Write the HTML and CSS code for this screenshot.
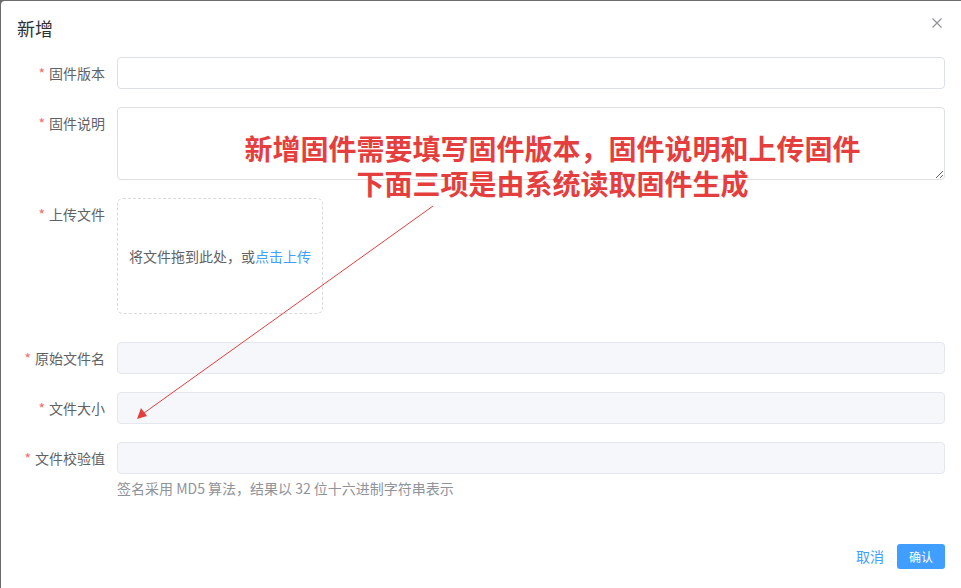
FILE: index.html
```html
<!DOCTYPE html>
<html lang="zh-CN">
<head>
<meta charset="utf-8">
<title>新增</title>
<link rel="stylesheet" href="styles.css">
</head>
<body>
<div class="dialog">
  <div class="header">
    <span class="title">新增</span>
    <svg class="close" width="10" height="10" viewBox="0 0 10 10"><path d="M0.5 0.5L9.5 9.5M9.5 0.5L0.5 9.5" stroke="#909399" stroke-width="1.2" fill="none"/></svg>
  </div>
  <div class="body">
    <div class="form-item">
      <label class="label"><span class="req">*</span>固件版本</label>
      <div class="control"><input class="input" type="text"></div>
    </div>
    <div class="form-item">
      <label class="label"><span class="req">*</span>固件说明</label>
      <div class="control"><textarea class="textarea"></textarea></div>
    </div>
    <div class="form-item upload-item">
      <label class="label"><span class="req">*</span>上传文件</label>
      <div class="control">
        <div class="dragger">将文件拖到此处，或<em class="link">点击上传</em></div>
      </div>
    </div>
    <div class="form-item">
      <label class="label"><span class="req">*</span>原始文件名</label>
      <div class="control"><input class="input disabled" type="text" disabled></div>
    </div>
    <div class="form-item">
      <label class="label"><span class="req">*</span>文件大小</label>
      <div class="control"><input class="input disabled" type="text" disabled></div>
    </div>
    <div class="form-item last">
      <label class="label"><span class="req">*</span>文件校验值</label>
      <div class="control">
        <input class="input disabled" type="text" disabled>
        <div class="hint">签名采用 MD5 算法，结果以 32 位十六进制字符串表示</div>
      </div>
    </div>
  </div>
  <div class="footer">
    <span class="btn-text">取消</span>
    <span class="btn-primary">确认</span>
  </div>
  <div class="note">新增固件需要填写固件版本，固件说明和上传固件<br>下面三项是由系统读取固件生成</div>
  <svg class="arrow" width="961" height="588" viewBox="0 0 961 588">
    <line x1="433" y1="206" x2="144" y2="413" stroke="#e53e3e" stroke-width="1"/>
    <path d="M137 419 L141 408 L147 416 Z" fill="#e53e3e"/>
  </svg>
</div>
</body>
</html>
```

FILE: styles.css
```css
html, body {
  margin: 0;
  padding: 0;
}
body {
  background: #6b6b6b;
  font-family: "Noto Sans CJK SC", "Noto Sans", "Liberation Sans", sans-serif;
  overflow: hidden;
}
.dialog {
  position: relative;
  margin: 1px 0 0 1px;
  width: 960px;
  height: 587px;
  background: #fff;
  border-radius: 4px 0 0 0;
  display: flex;
  flex-direction: column;
  box-sizing: border-box;
}
.header {
  display: flex;
  justify-content: space-between;
  align-items: flex-start;
  padding: 15px 19px 10px 16px;
  height: 50px;
  box-sizing: border-box;
}
.title {
  font-size: 18px;
  line-height: 24px;
  color: #303133;
}
.close {
  margin-top: 2px;
}
.body {
  padding: 6px 16px 0 20px;
}
.form-item {
  display: flex;
  margin-bottom: 18px;
}
.form-item.upload-item {
  margin-bottom: 28px;
}
.form-item.last {
  margin-bottom: 0;
}
.label {
  width: 96px;
  flex: none;
  box-sizing: border-box;
  padding-right: 12px;
  text-align: right;
  font-size: 14px;
  line-height: 32px;
  color: #606266;
  white-space: nowrap;
}
.req {
  color: #f56c6c;
  margin-right: 4px;
}
.control {
  flex: 1;
  min-width: 0;
}
.input {
  display: block;
  width: 100%;
  height: 32px;
  box-sizing: border-box;
  border: 1px solid #dcdfe6;
  border-radius: 4px;
  background: #fff;
  outline: none;
  padding: 0 15px;
  font: inherit;
}
.input.disabled {
  background: #f5f7fa;
  border-color: #e4e7ed;
}
.textarea {
  display: block;
  width: 100%;
  height: 73px;
  box-sizing: border-box;
  border: 1px solid #dcdfe6;
  border-radius: 4px;
  resize: vertical;
  outline: none;
  font: inherit;
  padding: 5px 15px;
}
.dragger {
  width: 206px;
  height: 116px;
  box-sizing: border-box;
  border: 1px dashed #d9d9d9;
  border-radius: 6px;
  display: flex;
  align-items: center;
  justify-content: center;
  font-size: 14px;
  color: #606266;
  white-space: nowrap;
}
.link {
  font-style: normal;
  color: #409eff;
}
.hint {
  margin-top: 4px;
  font-size: 14px;
  line-height: 20px;
  color: #909399;
}
.footer {
  margin-top: auto;
  display: flex;
  justify-content: flex-end;
  align-items: center;
  gap: 13px;
  padding: 0 16px 19px 0;
}
.btn-text {
  font-size: 14px;
  color: #409eff;
  line-height: 25px;
}
.btn-primary {
  width: 48px;
  height: 25px;
  line-height: 25px;
  text-align: center;
  background: #409eff;
  color: #fff;
  font-size: 12px;
  border-radius: 3px;
}
.note {
  position: absolute;
  left: 200px;
  top: 130px;
  width: 703px;
  text-align: center;
  font-size: 28px;
  line-height: 35px;
  font-weight: bold;
  color: #e53e3e;
  pointer-events: none;
}
.arrow {
  position: absolute;
  left: -1px;
  top: -1px;
  pointer-events: none;
}
```
